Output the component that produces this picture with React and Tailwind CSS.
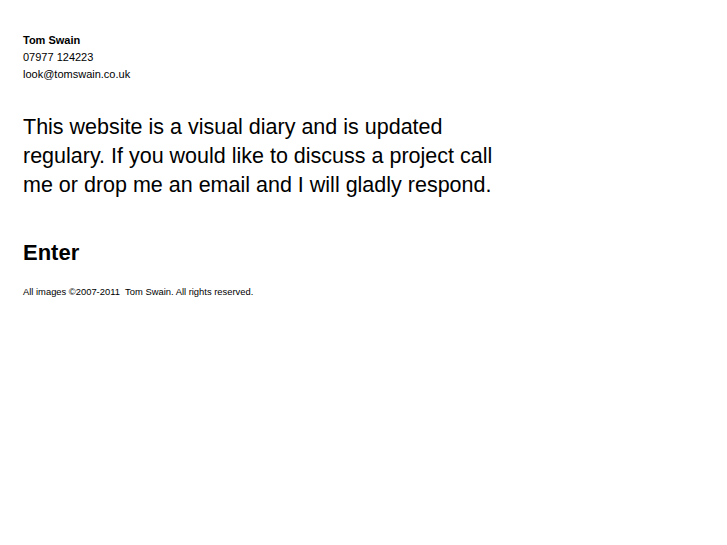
import React from "react";

const App = () => {
  return (
    <div className="min-h-screen bg-white text-black px-[23px] pt-[32px] font-['Liberation_Sans',Arial,sans-serif]">
      <div className="text-[11px] leading-[17px]">
        <p className="font-bold">Tom Swain</p>
        <p>07977 124223</p>
        <p>look@tomswain.co.uk</p>
      </div>

      <p className="mt-[30px] text-[21.5px] leading-[29px] max-w-[490px]">
        This website is a visual diary and is updated regulary. If you would like to discuss a project call me or drop me an email and I will gladly respond.
      </p>

      <h1 className="mt-[38px] text-[22px] leading-[29px] font-bold">
        <a href="#">Enter</a>
      </h1>

      <p className="mt-[19px] text-[9.4px] leading-[12px]">
        All images &copy;2007-2011 &nbsp;Tom Swain. All rights reserved.
      </p>
    </div>
  );
};

export default App;
